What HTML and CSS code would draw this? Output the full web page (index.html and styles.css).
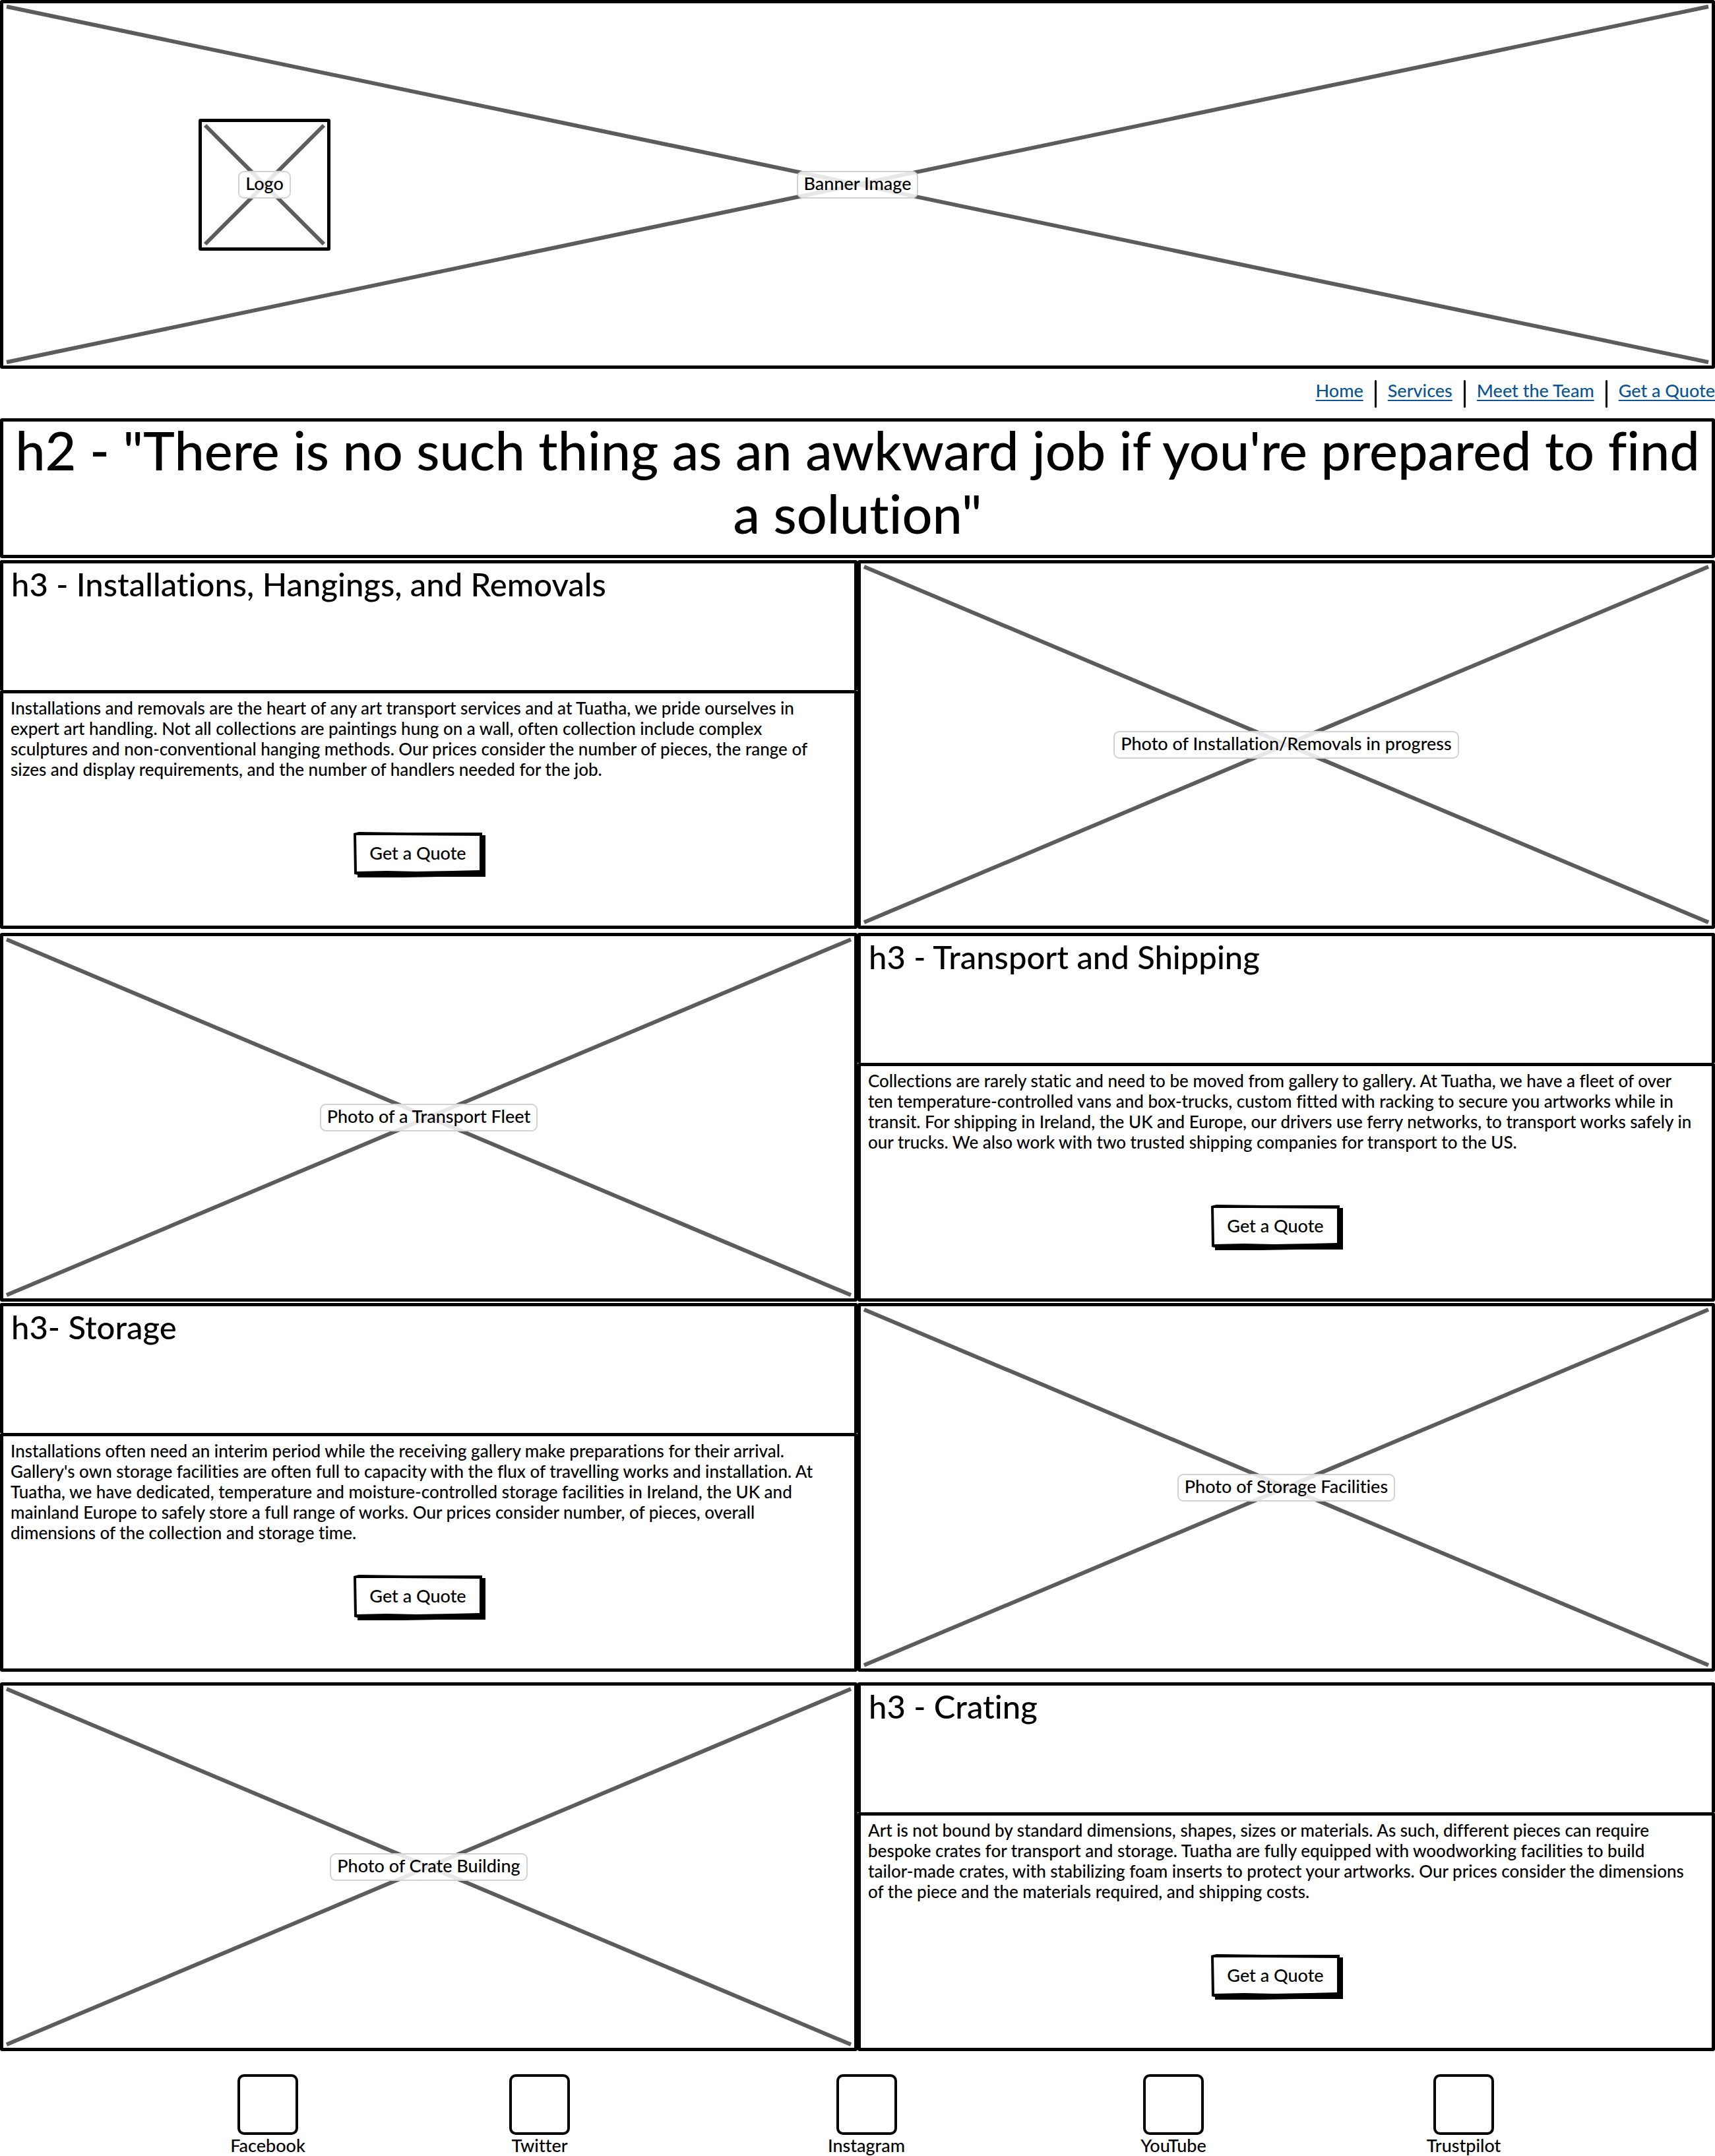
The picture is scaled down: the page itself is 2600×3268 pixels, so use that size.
FILE: index.html
```
<!DOCTYPE html>
<html lang="en">
<head>
<meta charset="utf-8">
<meta name="viewport" content="width=device-width, initial-scale=1">
<title>Tuatha – Services</title>
<link rel="stylesheet" href="styles.css">
</head>
<body>
<svg class="defs" aria-hidden="true">
  <symbol id="sketch-button" viewBox="0 0 200 69" preserveAspectRatio="none">
    <path d="M0 2 L8 0 L80 1 L195 1 L195 5 L200 5 L200 68 L130 68 L75 69 L6 69 L6 65 L1 64 Z" fill="#000"/>
    <path d="M4 5 L60 5 L191 6 L191 58 L150 59 L95 60 L50 59 L5 60 Z" fill="#fff"/>
  </symbol>
</svg>

<header class="banner frame">
  <svg class="cross" aria-hidden="true"><line x1="0" y1="0" x2="100%" y2="100%"/><line x1="0" y1="100%" x2="100%" y2="0"/></svg>
  <div class="logo frame">
    <svg class="cross" aria-hidden="true"><line x1="0" y1="0" x2="100%" y2="100%"/><line x1="0" y1="100%" x2="100%" y2="0"/></svg>
    <span class="tag">Logo</span>
  </div>
  <span class="tag">Banner Image</span>
</header>

<nav class="nav">
  <a href="#home">Home</a>
  <a href="#services">Services</a>
  <a href="#team">Meet the Team</a>
  <a href="#quote">Get a Quote</a>
</nav>

<main>
  <h2 class="headline frame">h2 - "There is no such thing as an awkward job if you're prepared to find a solution"</h2>

  <section class="service">
    <div class="info">
      <h3 class="title">h3 - Installations, Hangings, and Removals</h3>
      <div class="body frame">
        <p>Installations and removals are the heart of any art transport services and at Tuatha, we pride ourselves in<br>expert art handling. Not all collections are paintings hung on a wall, often collection include complex<br>sculptures and non-conventional hanging methods. Our prices consider the number of pieces, the range of<br>sizes and display requirements, and the number of handlers needed for the job.</p>
        <button type="button" class="quote"><svg aria-hidden="true"><use href="#sketch-button"/></svg><span>Get a Quote</span></button>
      </div>
    </div>
    <div class="photo frame">
      <svg class="cross" aria-hidden="true"><line x1="0" y1="0" x2="100%" y2="100%"/><line x1="0" y1="100%" x2="100%" y2="0"/></svg>
      <span class="tag">Photo of Installation/Removals in progress</span>
    </div>
  </section>

  <section class="service">
    <div class="photo frame">
      <svg class="cross" aria-hidden="true"><line x1="0" y1="0" x2="100%" y2="100%"/><line x1="0" y1="100%" x2="100%" y2="0"/></svg>
      <span class="tag">Photo of a Transport Fleet</span>
    </div>
    <div class="info">
      <h3 class="title">h3 - Transport and Shipping</h3>
      <div class="body frame">
        <p>Collections are rarely static and need to be moved from gallery to gallery. At Tuatha, we have a fleet of over<br>ten temperature-controlled vans and box-trucks, custom fitted with racking to secure you artworks while in<br>transit. For shipping in Ireland, the UK and Europe, our drivers use ferry networks, to transport works safely in<br>our trucks. We also work with two trusted shipping companies for transport to the US.</p>
        <button type="button" class="quote"><svg aria-hidden="true"><use href="#sketch-button"/></svg><span>Get a Quote</span></button>
      </div>
    </div>
  </section>

  <section class="service">
    <div class="info">
      <h3 class="title">h3- Storage</h3>
      <div class="body frame">
        <p>Installations often need an interim period while the receiving gallery make preparations for their arrival.<br>Gallery's own storage facilities are often full to capacity with the flux of travelling works and installation. At<br>Tuatha, we have dedicated, temperature and moisture-controlled storage facilities in Ireland, the UK and<br>mainland Europe to safely store a full range of works. Our prices consider number, of pieces, overall<br>dimensions of the collection and storage time.</p>
        <button type="button" class="quote"><svg aria-hidden="true"><use href="#sketch-button"/></svg><span>Get a Quote</span></button>
      </div>
    </div>
    <div class="photo frame">
      <svg class="cross" aria-hidden="true"><line x1="0" y1="0" x2="100%" y2="100%"/><line x1="0" y1="100%" x2="100%" y2="0"/></svg>
      <span class="tag">Photo of Storage Facilities</span>
    </div>
  </section>

  <section class="service">
    <div class="photo frame">
      <svg class="cross" aria-hidden="true"><line x1="0" y1="0" x2="100%" y2="100%"/><line x1="0" y1="100%" x2="100%" y2="0"/></svg>
      <span class="tag">Photo of Crate Building</span>
    </div>
    <div class="info">
      <h3 class="title">h3 - Crating</h3>
      <div class="body frame">
        <p>Art is not bound by standard dimensions, shapes, sizes or materials. As such, different pieces can require<br>bespoke crates for transport and storage. Tuatha are fully equipped with woodworking facilities to build<br>tailor-made crates, with stabilizing foam inserts to protect your artworks. Our prices consider the dimensions<br>of the piece and the materials required, and shipping costs.</p>
        <button type="button" class="quote"><svg aria-hidden="true"><use href="#sketch-button"/></svg><span>Get a Quote</span></button>
      </div>
    </div>
  </section>
</main>

<footer class="social">
  <div class="item"><span class="icon"></span>Facebook</div>
  <div class="item"><span class="icon"></span>Twitter</div>
  <div class="item"><span class="icon"></span>Instagram</div>
  <div class="item"><span class="icon"></span>YouTube</div>
  <div class="item"><span class="icon"></span>Trustpilot</div>
</footer>
</body>
</html>
```
FILE: styles.css
```
*, *::before, *::after { box-sizing: border-box; }

body {
  margin: 0;
  background: #fff;
  color: #000;
  font: 500 26px/31px Lato, "Open Sans", sans-serif;
  font-variant-ligatures: none;
}

.defs { display: none; }

/* Heavy outline drawn inside the box, so it takes no layout space */
.frame {
  box-shadow: inset 0 0 0 5px #000;
  border-radius: 3px;
}

.cross {
  position: absolute;
  inset: 10px;
  width: calc(100% - 20px);
  height: calc(100% - 20px);
  overflow: visible;
}
.cross line { stroke: #5c5c5c; stroke-width: 6px; }

.tag {
  position: relative;
  padding: 1px 9px 6px;
  border: 2px solid #d2d2d2;
  border-radius: 9px;
  background: rgba(255, 255, 255, 0.85);
  font-size: 27px;
  white-space: nowrap;
}

.banner {
  position: relative;
  display: flex;
  align-items: center;
  justify-content: center;
  min-height: 559px;
}
.logo {
  position: absolute;
  left: 301px;
  display: flex;
  align-items: center;
  justify-content: center;
  width: 200px;
  height: 200px;
}

.nav {
  display: flex;
  align-items: center;
  justify-content: flex-end;
  height: 75px;
  font-size: 27px;
}
.nav a {
  display: flex;
  align-items: flex-start;
  min-height: 42px;
  color: #0b5496;
  text-decoration: underline;
  text-decoration-thickness: 2px;
  text-underline-offset: 4px;
}
.nav a + a::before {
  content: "";
  width: 3px;
  height: 42px;
  margin: 0 17px;
  border-radius: 2px;
  background: #000;
}

.headline {
  margin: 0 0 3px;
  min-height: 212px;
  padding: 0 16px 20px;
  font-size: 81px;
  line-height: 96px;
  font-weight: 500;
  text-align: center;
}

.service {
  display: grid;
  grid-template-columns: 1fr 1fr;
  margin-bottom: 6px;
}
.service:nth-of-type(2) { margin-bottom: 2px; }
.service:nth-of-type(3) { margin-bottom: 16px; }
.service:nth-of-type(4) { margin-bottom: 0; }

.info { display: flex; flex-direction: column; }
.title {
  margin: 0;
  min-height: 197px;
  padding: 2px 12px;
  border: 5px solid #000;
  border-bottom: 0;
  border-radius: 3px 3px 0 0;
  font-size: 49px;
  line-height: 58px;
  font-weight: 500;
}
.body {
  flex: 1;
  display: flex;
  flex-direction: column;
  align-items: center;
  padding: 12px 16px 78px;
}
.body p { width: 100%; min-height: 203px; margin: 0; white-space: nowrap; }

.quote {
  position: relative;
  width: 200px;
  height: 69px;
  margin-right: 28px;
  padding: 0 5px 6px 0;
  border: 0;
  background: none;
  color: inherit;
  font: inherit;
  font-size: 27px;
}
.quote svg { position: absolute; inset: 0; width: 100%; height: 100%; }
.quote span { position: relative; }

.photo {
  position: relative;
  display: flex;
  align-items: center;
  justify-content: center;
}

.social {
  display: grid;
  grid-template-columns: 412fr 412fr 579fr 352fr 528fr;
  padding: 35px 117px 0 200px;
}
.item { display: flex; flex-direction: column; align-items: center; font-size: 27px; }
.icon {
  width: 92px;
  height: 92px;
  border: 4px solid #000;
  border-radius: 10px;
}
```
